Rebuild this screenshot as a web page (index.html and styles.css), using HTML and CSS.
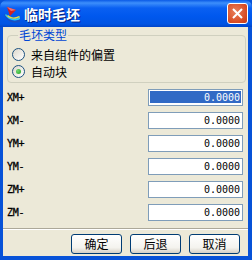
FILE: index.html
```html
<!DOCTYPE html>
<html lang="zh">
<head>
    <meta charset="UTF-8">
    <title>临时毛坯</title>
    <link rel="stylesheet" href="styles.css">
</head>
<body>
<div class="window">
    <div class="titlebar">
        <svg class="app-icon" width="17" height="17" viewBox="0 0 17 17">
            <path d="M1 8 C4 15 11 17 16 13 L16 16 C10 18 3 16 0 9 Z" fill="#1a4fc0"/>
            <path d="M2 8 C5 13 11 14 16 11 L16 13 C11 16 4 14 1 9 Z" fill="#35c8e8"/>
            <path d="M4 9 C7 12 11 12 15 10 L16 11 C11 14 6 13 3 10 Z" fill="#e8e040"/>
            <path d="M3 1 L12 4 L6 10 Z" fill="#d42020"/>
            <path d="M3 1 L12 4 L7 5 Z" fill="#f07070"/>
        </svg>
        <span class="title">临时毛坯</span>
        <div class="close">
            <svg width="11" height="11" viewBox="0 0 11 11">
                <path d="M1 1 L10 10 M10 1 L1 10" stroke="#fff" stroke-width="2"/>
            </svg>
        </div>
    </div>

    <div class="content">
        <fieldset class="group">
            <legend>毛坯类型</legend>
            <div class="radio-row">
                <span class="radio"></span>
                <span>来自组件的偏置</span>
            </div>
            <div class="radio-row">
                <span class="radio checked"></span>
                <span>自动块</span>
            </div>
        </fieldset>

        <div class="rows">
            <div class="row"><span class="label">XM+</span><div class="field"><span class="value selected">0.0000</span></div></div>
            <div class="row"><span class="label">XM-</span><div class="field"><span class="value">0.0000</span></div></div>
            <div class="row"><span class="label">YM+</span><div class="field"><span class="value">0.0000</span></div></div>
            <div class="row"><span class="label">YM-</span><div class="field"><span class="value">0.0000</span></div></div>
            <div class="row"><span class="label">ZM+</span><div class="field"><span class="value">0.0000</span></div></div>
            <div class="row"><span class="label">ZM-</span><div class="field"><span class="value">0.0000</span></div></div>
        </div>

        <div class="separator"></div>

        <div class="buttons">
            <button>确定</button>
            <button>后退</button>
            <button>取消</button>
        </div>
    </div>
</div>
</body>
</html>
```

FILE: styles.css
```css
body {
    margin: 0;
    font-family: "Noto Sans CJK SC", sans-serif;
    font-size: 12px;
    color: #000;
}

.window {
    width: 252px;
    height: 260px;
    background: #0752d8;
    display: flex;
    flex-direction: column;
}

.titlebar {
    height: 27px;
    flex: none;
    display: flex;
    align-items: center;
    padding: 0 5px 0 4px;
    background: linear-gradient(#0a5ae6, #3d8ffb 3px, #0a60f2 8px, #0058ee 16px, #0054e3 24px, #0044c8);
    border-radius: 7px 7px 0 0;
}

.app-icon {
    flex: none;
    margin-top: 1px;
}

.title {
    margin-left: 3px;
    color: #fff;
    font-weight: bold;
    font-size: 14px;
    line-height: 16px;
    text-shadow: 1px 1px #0a1e78;
    flex: 1;
}

.close {
    width: 19px;
    height: 19px;
    border: 1px solid #fff;
    border-radius: 3px;
    margin-right: -1px;
    background: radial-gradient(circle at 40% 40%, #e8805c, #d84a22 70%, #c03a18);
    display: flex;
    align-items: center;
    justify-content: center;
}

.content {
    flex: 1;
    margin: 0 4px 4px 3px;
    background: #ece9d8;
    display: flex;
    flex-direction: column;
}

.group {
    margin: 1px 2px 0 4px;
    padding: 4px 4px 2px 4px;
    border: 1px solid #d0d0bf;
    border-radius: 4px;
}

.group legend {
    color: #0046d5;
    padding: 0 1px;
    margin-left: 6px;
    line-height: 14px;
}

.radio-row {
    height: 17px;
    display: flex;
    align-items: center;
    gap: 6px;
    line-height: 14px;
}

.radio {
    width: 11px;
    height: 11px;
    border: 1px solid #1c5180;
    border-radius: 50%;
    background: linear-gradient(135deg, #dcd7cb, #fff);
    display: flex;
    align-items: center;
    justify-content: center;
}

.radio.checked::after {
    content: "";
    width: 5px;
    height: 5px;
    border-radius: 50%;
    background: radial-gradient(circle at 35% 35%, #6fd86f, #21a121);
}

.rows {
    margin-top: 6px;
    display: flex;
    flex-direction: column;
    gap: 6px;
}

.row {
    height: 17px;
    display: flex;
    align-items: center;
    justify-content: space-between;
    padding: 0 5px 0 4px;
}

.label {
    font-family: "DejaVu Sans Mono", monospace;
    font-size: 10px;
    letter-spacing: -0.3px;
    -webkit-text-stroke: 0.3px #000;
}

.field {
    border: 1px solid #7f9db9;
    background: #fff;
    padding: 1px;
    width: 91px;
    height: 13px;
}

.value {
    display: block;
    height: 12px;
    line-height: 13px;
    text-align: right;
    padding-right: 1px;
    font-family: "DejaVu Sans Mono", monospace;
    font-size: 10px;
}

.value.selected {
    background: #316ac5;
    color: #fff;
}

.separator {
    margin-top: 7px;
    height: 1px;
    background: #aca899;
    border-bottom: 1px solid #fff;
}

.buttons {
    margin-top: 4px;
    display: flex;
    justify-content: flex-end;
    gap: 8px;
    padding-right: 8px;
}

button {
    width: 51px;
    height: 20px;
    border: 1px solid #003c74;
    border-radius: 3px;
    background: linear-gradient(#fff, #f4f3ee 70%, #d6d0c5);
    font-family: "Noto Sans CJK SC", sans-serif;
    font-size: 12px;
    padding: 0;
    line-height: 16px;
}
```
